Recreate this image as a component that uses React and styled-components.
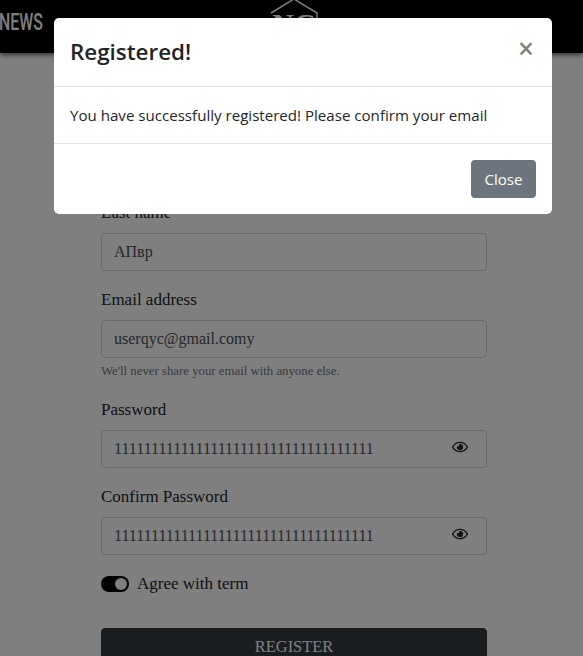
import React from "react";
import styled, { createGlobalStyle } from "styled-components";
import { FaRegEye } from "react-icons/fa";

const Global = createGlobalStyle`
  html, body {
    margin: 0;
    height: 100%;
    overflow: hidden;
    background: #fff;
  }
  * {
    box-sizing: border-box;
  }
`;

const Header = styled.header`
  height: 53px;
  background: #000;
  box-shadow: 0 2px 5px rgba(0, 0, 0, 0.6);
  display: flex;
  overflow: hidden;
`;

const News = styled.div`
  width: 270px;
  padding-top: 8px;
  margin-left: -1px;
  margin-right: 1px;
  color: #fff;
  font-family: "Roboto", sans-serif;
  font-size: 24px;
  font-weight: 500;
  line-height: 28px;
  transform: scaleX(0.66);
  transform-origin: left top;
`;

const Logo = styled.svg`
  width: 48px;
  height: 53px;
  flex: none;
`;

const Form = styled.form`
  width: 386px;
  margin: 147px 0 0 101px;
  font-family: "Liberation Serif", serif;
  font-size: 17px;
  color: #212529;
`;

const Group = styled.div`
  margin-bottom: 16px;
`;

const Label = styled.label`
  display: block;
  line-height: 25px;
  margin-bottom: 8px;
`;

const InputWrap = styled.div`
  position: relative;
`;

const Input = styled.input`
  display: block;
  width: 100%;
  height: 38px;
  padding: 6px 12px;
  border: 1px solid #ced4da;
  border-radius: 4px;
  background: #fff;
  color: #495057;
  font-family: inherit;
  font-size: 16px;
`;

const Eye = styled.span`
  position: absolute;
  top: 9px;
  right: 19px;
  display: flex;
  color: #212529;
  font-size: 16px;
`;

const Hint = styled.small`
  display: block;
  margin-top: 4px;
  color: #6c757d;
  font-size: 12.8px;
  line-height: 19px;
`;

const SwitchRow = styled.div`
  display: flex;
  align-items: center;
  gap: 8px;
  height: 25px;
  margin: 16px 0 32px;
`;

const Track = styled.span`
  width: 28px;
  height: 16px;
  padding: 2px;
  border-radius: 8px;
  background: #000;
  display: flex;
  justify-content: flex-end;
`;

const Knob = styled.span`
  width: 12px;
  height: 12px;
  border-radius: 50%;
  background: #fff;
`;

const Register = styled.button`
  display: block;
  width: 100%;
  height: 38px;
  border: 1px solid #343a40;
  border-radius: 4px;
  background: #343a40;
  color: #fff;
  font-family: inherit;
  font-size: 16.4px;
`;

const Backdrop = styled.div`
  position: fixed;
  inset: 0;
  background: rgba(0, 0, 0, 0.5);
`;

const Modal = styled.div`
  position: fixed;
  top: 18px;
  left: 54px;
  width: 498px;
  border-radius: 5px;
  background: #fff;
  color: #212529;
  font-family: "Open Sans", sans-serif;
`;

const ModalHeader = styled.div`
  display: flex;
  justify-content: space-between;
  padding: 16px;
  border-bottom: 1px solid #dee2e6;
`;

const ModalTitle = styled.h4`
  margin: 0;
  font-size: 22.4px;
  font-weight: 600;
  line-height: 36px;
`;

const Dismiss = styled.span`
  margin-right: 2px;
  color: #000;
  opacity: 0.5;
  font-size: 28px;
  font-weight: 600;
  line-height: 28px;
`;

const ModalBody = styled.div`
  padding: 16px;
  font-size: 15.1px;
  line-height: 24px;
`;

const ModalFooter = styled.div`
  display: flex;
  justify-content: flex-end;
  padding: 16px;
  border-top: 1px solid #dee2e6;
`;

const CloseButton = styled.button`
  width: 65px;
  height: 38px;
  padding: 0;
  border: 0;
  border-radius: 4px;
  background: #6c757d;
  color: #fff;
  font-family: inherit;
  font-size: 15.1px;
`;

function Field({ label, value, hint, secret }) {
  return (
    <Group>
      <Label>{label}</Label>
      <InputWrap>
        <Input readOnly value={value} />
        {secret && (
          <Eye>
            <FaRegEye />
          </Eye>
        )}
      </InputWrap>
      {hint && <Hint>{hint}</Hint>}
    </Group>
  );
}

export default function App() {
  const pass = "1".repeat(35);
  return (
    <>
      <Global />
      <Header>
        <News>NEWS</News>
        <Logo viewBox="0 0 48 53">
          <path d="M1 13 L24 -1 L47 13 V40" fill="none" stroke="#fff" strokeWidth="1.5" />
          <text x="24" y="34" textAnchor="middle" fill="#fff" fontFamily="Liberation Serif" fontWeight="700" fontSize="30">NC</text>
        </Logo>
      </Header>
      <Form>
        <Field label="Last name" value="АПвр" />
        <Field label="Email address" value="userqyc@gmail.comy" hint="We'll never share your email with anyone else." />
        <Field label="Password" value={pass} secret />
        <Field label="Confirm Password" value={pass} secret />
        <SwitchRow>
          <Track><Knob /></Track>
          Agree with term
        </SwitchRow>
        <Register type="button">REGISTER</Register>
      </Form>
      <Backdrop />
      <Modal>
        <ModalHeader>
          <ModalTitle>Registered!</ModalTitle>
          <Dismiss>×</Dismiss>
        </ModalHeader>
        <ModalBody>You have successfully registered! Please confirm your email</ModalBody>
        <ModalFooter>
          <CloseButton>Close</CloseButton>
        </ModalFooter>
      </Modal>
    </>
  );
}
